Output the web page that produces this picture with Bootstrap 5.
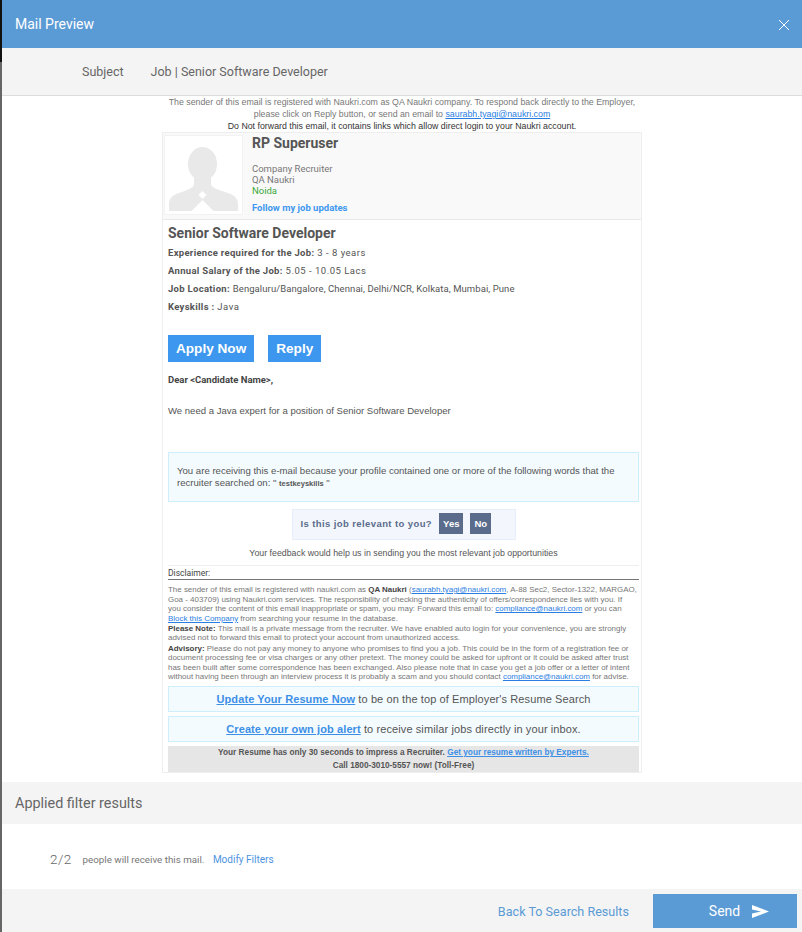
<!DOCTYPE html>
<html lang="en">
<head>
    <link rel="stylesheet" href="https://cdn.jsdelivr.net/npm/bootstrap@5.3.3/dist/css/bootstrap.min.css">
    <meta charset="UTF-8">
    <meta name="viewport" content="width=device-width, initial-scale=1.0">
    <title>Mail Preview</title>
    <style>
        html, body { height: 932px; overflow: hidden; }
        body {
            background: linear-gradient(#111 0, #111 62px, #666 62px);
            padding-left: 2px;
            font-family: Roboto, sans-serif;
            color: #555;
        }
        .modal-wrap { background: #fff; height: 932px; }
        .mail-head {
            height: 48px;
            background: #5b9bd5;
            color: #fff;
            font-size: 14px;
            padding: 1px 11px 0 13px;
        }
        .close-x { width: 14px; height: 14px; }
        .subject-row {
            height: 48px;
            background: #f4f4f4;
            border-bottom: 1px solid #ddd;
            font-size: 12.5px;
            color: #666;
            padding: 1px 0 0 80px;
            gap: 27px;
        }
        .mail-body { height: 686px; }
        .pre-note {
            font-family: "Liberation Sans", sans-serif;
            font-size: 8.8px;
            line-height: 12px;
            text-align: center;
            color: #777;
        }
        .pre-note b { font-weight: 400; color: #333; }
        .pre-note a, .legal a { color: #2a7de1; }
        .email-box {
            width: 480px;
            height: 641px;
            margin: 0 0 0 160px;
            border: 1px solid #eee;
        }
        .rec-block {
            height: 87px;
            background: #f9f9f9;
            border-bottom: 1px solid #e8e8e8;
            padding: 2px 1px;
            gap: 9px;
        }
        .avatar-tile {
            width: 79px;
            height: 80px;
            background: #fff;
            border: 1px solid #f2f2f2;
        }
        .rec-name { font-size: 14px; font-weight: 700; line-height: 16px; margin-bottom: 12px; }
        .rec-line { font-size: 9.5px; line-height: 11px; color: #777; }
        .rec-city { color: #3aa83a; }
        .follow-link { font-size: 9.5px; font-weight: 700; color: #3d97ee; text-decoration: none; line-height: 11px; margin-top: 6px; display: block; }
        .job-block { padding: 5px 2px 0 5px; }
        .job-title { font-size: 14px; font-weight: 700; line-height: 16px; margin-bottom: 3px; }
        .job-line { font-size: 9.5px; letter-spacing: .5px; line-height: 18px; color: #555; }
        .job-line b { font-weight: 700; letter-spacing: .3px; }
        .job-place { letter-spacing: .08px; }
        .cta-row { margin-top: 19px; gap: 14px; }
        .cta-btn {
            background: #3d97ee;
            color: #fff;
            font-family: "Liberation Sans", sans-serif;
            font-size: 13.6px;
            font-weight: 700;
            line-height: 27px;
            padding: 0 8px;
            text-decoration: none;
        }
        .dear { font-size: 9.5px; font-weight: 700; margin-top: 12px; line-height: 11px; color: #444; }
        .need { font-family: "Liberation Sans", sans-serif; font-size: 9.55px; line-height: 11px; margin-top: 20px; }
        .why-box {
            margin-top: 36px;
            height: 50px;
            background: #f3fbff;
            border: 1px solid #cdeefc;
            padding: 12px 8px;
            font-family: "Liberation Sans", sans-serif;
            font-size: 9.6px;
            line-height: 12px;
        }
        .why-box small { font-size: 7.5px; font-weight: 700; }
        .rel-box {
            width: 224px;
            height: 31px;
            margin: 7px auto 0;
            background: #f3f7fd;
            border: 1px solid #e6eefa;
            font-family: "Liberation Sans", sans-serif;
            font-size: 9.5px;
            font-weight: 700;
            letter-spacing: .4px;
            color: #5a6b8c;
            padding: 3px 0 0 8px;
        }
        .rel-btn { background: #5a6b8c; color: #fff; line-height: 21px; padding: 0 4px; margin-left: 4px; letter-spacing: 0; }
        .rel-btn + .rel-btn { margin-left: 7px; }
        .feedback { font-family: "Liberation Sans", sans-serif; font-size: 8.8px; text-align: center; line-height: 11px; margin-top: 8px; }
        .disc-head {
            font-size: 8.5px;
            line-height: 12px;
            margin-top: 6px;
            border-top: 1px solid #eee;
            border-bottom: 1px solid #777;
            padding: 1px 0 0;
            color: #444;
        }
        .legal {
            font-family: "Liberation Sans", sans-serif;
            font-size: 7.95px;
            line-height: 9.6px;
            color: #777;
            margin-top: 5px;
        }
        .legal b { color: #444; }
        .legal p { margin: 0 0 .5px; }
        .promo-box {
            height: 26px;
            margin-top: 4px;
            background: #f3fbff;
            border: 1px solid #cdeefc;
            text-align: center;
            font-family: "Liberation Sans", sans-serif;
            font-size: 11px;
            letter-spacing: .1px;
            line-height: 24px;
            color: #555;
        }
        .promo-box a { color: #3d8fe6; font-weight: 700; }
        .expert-box {
            margin-top: 4px;
            height: 26px;
            background: #e6e6e6;
            text-align: center;
            font-family: "Liberation Sans", sans-serif;
            font-size: 8.25px;
            font-weight: 700;
            line-height: 13px;
            color: #555;
        }
        .expert-box a { color: #3d8fe6; }
        .filter-head {
            height: 42px;
            background: #f4f4f4;
            font-size: 14.4px;
            color: #666;
            padding: 1px 0 0 13px;
        }
        .filter-body { height: 65px; padding: 6px 0 0 48px; gap: 11px; font-size: 9.8px; color: #777; }
        .count { font-size: 13.5px; font-weight: 300; color: #666; letter-spacing: .4px; }
        .filter-body a { color: #4d94e0; text-decoration: none; margin-left: 6px; font-size: 10px; }
        .foot-bar { height: 43px; background: #f4f4f4; padding-right: 5px; gap: 23px; }
        .back-link { color: #5b9bd5; font-size: 12.6px; text-decoration: none; padding: 3px 1px 0 0; }
        .send-btn {
            width: 144px;
            height: 34px;
            background: #5b9bd5;
            color: #fff;
            border: 0;
            border-radius: 0;
            font-size: 14px;
            gap: 12px;
            padding: 2px 0 0 28px;
        }
        .send-btn:hover { background: #4d8dc7; color: #fff; }
    </style>
</head>
<body>
    <div class="modal-wrap">
        <div class="mail-head d-flex align-items-center justify-content-between">
            <span>Mail Preview</span>
            <svg class="close-x" viewBox="0 0 14 14"><path d="M2 2l10 10M12 2L2 12" stroke="#fff" stroke-width="1"/></svg>
        </div>
        <div class="subject-row d-flex align-items-center">
            <span>Subject</span>
            <span>Job | Senior Software Developer</span>
        </div>
        <div class="mail-body">
            <div class="pre-note">
                The sender of this email is registered with Naukri.com as QA Naukri company. To respond back directly to the Employer,<br>
                please click on Reply button, or send an email to <a href="#">saurabh.tyagi@naukri.com</a><br>
                <b>Do Not forward this email, it contains links which allow direct login to your Naukri account.</b>
            </div>
            <div class="email-box">
                <div class="rec-block d-flex">
                    <div class="avatar-tile flex-shrink-0">
                        <svg class="d-block" width="77" height="78" viewBox="0 0 77 78">
                            <path fill="#e9e9e9" d="M29 40v8c0 4-7 6-15 9-6 2-10 5-10 11v7h69v-7c0-6-4-9-10-11-8-3-17-5-17-9v-8z"/>
                            <ellipse fill="#e9e9e9" cx="37.500" cy="28" rx="14.500" ry="17"/>
                            <path fill="#fff" d="M37.500 55l4 4-4 4-4-4zM37.500 64l11 11h-22z"/>
                        </svg>
                    </div>
                    <div>
                        <div class="rec-name">RP Superuser</div>
                        <div class="rec-line">Company Recruiter</div>
                        <div class="rec-line">QA Naukri</div>
                        <div class="rec-line rec-city">Noida</div>
                        <a class="follow-link" href="#">Follow my job updates</a>
                    </div>
                </div>
                <div class="job-block">
                    <div class="job-title">Senior Software Developer</div>
                    <div class="job-line"><b>Experience required for the Job:</b> 3 - 8 years</div>
                    <div class="job-line"><b>Annual Salary of the Job:</b> 5.05 - 10.05 Lacs</div>
                    <div class="job-line"><b>Job Location:</b> <span class="job-place">Bengaluru/Bangalore, Chennai, Delhi/NCR, Kolkata, Mumbai, Pune</span></div>
                    <div class="job-line"><b>Keyskills :</b> Java</div>
                    <div class="cta-row d-flex">
                        <a class="cta-btn" href="#">Apply Now</a>
                        <a class="cta-btn" href="#">Reply</a>
                    </div>
                    <div class="dear">Dear &lt;Candidate Name&gt;,</div>
                    <div class="need">We need a Java expert for a position of Senior Software Developer</div>
                    <div class="why-box">You are receiving this e-mail because your profile contained one or more of the following words that the recruiter searched on: " <small>testkeyskills</small> "</div>
                    <div class="rel-box">Is this job relevant to you? <span class="rel-btn d-inline-block">Yes</span><span class="rel-btn d-inline-block">No</span></div>
                    <div class="feedback">Your feedback would help us in sending you the most relevant job opportunities</div>
                    <div class="disc-head">Disclaimer:</div>
                    <div class="legal">
                        <p>The sender of this email is registered with naukri.com as <b>QA Naukri</b> (<a href="#">saurabh.tyagi@naukri.com</a>, A-88 Sec2, Sector-1322, MARGAO, Goa - 403709) using Naukri.com services. The responsibility of checking the authenticity of offers/correspondence lies with you. If<br>you consider the content of this email inappropriate or spam, you may: Forward this email to: <a href="#">compliance@naukri.com</a> or you can<br><a href="#">Block this Company</a> from searching your resume in the database.</p>
                        <p><b>Please Note:</b> This mail is a private message from the recruiter. We have enabled auto login for your convenience, you are strongly advised not to forward this email to protect your account from unauthorized access.</p>
                        <p><b>Advisory:</b> Please do not pay any money to anyone who promises to find you a job. This could be in the form of a registration fee or document processing fee or visa charges or any other pretext. The money could be asked for upfront or it could be asked after trust has been built after some correspondence has been exchanged. Also please note that in case you get a job offer or a letter of intent without having been through an interview process it is probably a scam and you should contact <a href="#">compliance@naukri.com</a> for advise.</p>
                    </div>
                    <div class="promo-box"><a href="#">Update Your Resume Now</a> to be on the top of Employer's Resume Search</div>
                    <div class="promo-box"><a href="#">Create your own job alert</a> to receive similar jobs directly in your inbox.</div>
                    <div class="expert-box">Your Resume has only 30 seconds to impress a Recruiter. <a href="#">Get your resume written by Experts.</a><br>Call 1800-3010-5557 now! (Toll-Free)</div>
                </div>
            </div>
        </div>
        <div class="filter-head d-flex align-items-center">Applied filter results</div>
        <div class="filter-body d-flex align-items-center">
            <span class="count">2/2</span>
            <span>people will receive this mail. <a href="#">Modify Filters</a></span>
        </div>
        <div class="foot-bar d-flex align-items-center justify-content-end">
            <a class="back-link" href="#">Back To Search Results</a>
            <button class="btn send-btn d-flex align-items-center justify-content-center">
                Send
                <svg width="17" height="13" viewBox="0 0 17 13"><path fill="#fff" d="M0 0l17 6.500-17 6.500V8.500l9-2-9-2z"/></svg>
            </button>
        </div>
    </div>
</body>
</html>
